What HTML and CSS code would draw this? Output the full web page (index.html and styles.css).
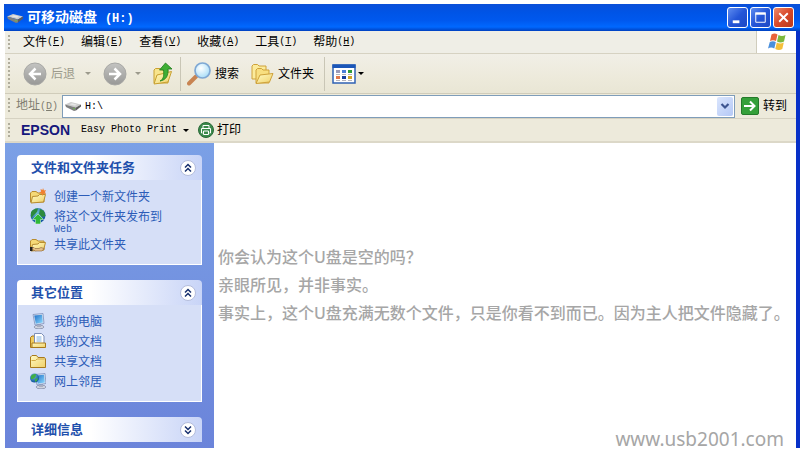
FILE: index.html
```html
<!DOCTYPE html>
<html lang="zh-CN">
<head>
  <meta charset="UTF-8">
  <meta name="viewport" content="width=device-width, initial-scale=1.0">
  <title>可移动磁盘 (H:)</title>
  <link rel="stylesheet" href="styles.css">
</head>
<body>
  <!-- shared icons -->
  <svg class="defs" width="0" height="0" aria-hidden="true">
    <defs>
      <linearGradient id="gray" x1="0" y1="0" x2="0" y2="1"><stop offset="0" stop-color="#c4c4c2"/><stop offset="1" stop-color="#989896"/></linearGradient>
      <linearGradient id="yellow" x1="0" y1="0" x2="1" y2="1"><stop offset="0" stop-color="#fffbc4"/><stop offset="1" stop-color="#f0d068"/></linearGradient>
      <linearGradient id="screen" x1="0" y1="0" x2="1" y2="1"><stop offset="0" stop-color="#1f6fc8"/><stop offset="1" stop-color="#8edcff"/></linearGradient>
      <radialGradient id="globe" cx="0.4" cy="0.3" r="0.7"><stop offset="0" stop-color="#6cc0d8"/><stop offset="1" stop-color="#0d4f9c"/></radialGradient>
      <radialGradient id="lens" cx="0.4" cy="0.35" r="0.7"><stop offset="0" stop-color="#ffffff"/><stop offset="1" stop-color="#a4dcf8"/></radialGradient>
    </defs>
    <symbol id="drive" viewBox="0 0 16 16">
      <path d="M0 6.500 6 4 16 6.500 11 9.500z" fill="#cccccc"/>
      <path d="M0 6.500 11 9.500 11 12.500 9 13 1 9z" fill="#7f7f7f"/>
      <path d="M11 9.500 16 6.500 16 8.500 11 12.500z" fill="#5c5c5c"/>
      <path d="M4 6.300 7 5.200 12 6.500 10 7.800z" fill="#e6e6e6"/>
      <circle cx="9" cy="10.600" r="0.8" fill="#6fc04a"/>
    </symbol>
    <symbol id="up2" viewBox="0 0 18 18">
      <circle cx="9" cy="9" r="7.500" fill="#fff" stroke="#b4bddc"/>
      <path d="M6 8.500 9 5.500l3 3M6 12.500l3-3 3 3" fill="none" stroke="#17306e" stroke-width="1.500"/>
    </symbol>
    <symbol id="down2" viewBox="0 0 18 18">
      <circle cx="9" cy="9" r="7.500" fill="#fff" stroke="#b4bddc"/>
      <path d="M6 5.500l3 3 3-3M6 9.500l3 3 3-3" fill="none" stroke="#17306e" stroke-width="1.500"/>
    </symbol>
    <symbol id="folder" viewBox="0 0 16 16">
      <path d="M.5 14V4L2 2.500h4.500L8 4.500h6.500L15.500 6v8.500H.5z" fill="url(#yellow)" stroke="#a87a1c"/>
      <path d="M1.500 7.500h4L7 6h7.500" fill="none" stroke="#d4ac48"/>
    </symbol>
    <symbol id="open" viewBox="0 0 16 16">
      <path d="M.5 14V5L2 3.500h4L8 5h6v9z" fill="#f5d977" stroke="#b88c30"/>
      <path d="M1 15 2.500 8.500 8 8l1.500-1.500h6L13.500 14z" fill="url(#yellow)" stroke="#b88c30"/>
    </symbol>
    <symbol id="monitor" viewBox="0 0 16 16">
      <ellipse cx="9" cy="14" rx="5" ry="1.800" fill="#cfd3df" stroke="#7d86a4" stroke-width="0.700"/>
      <path d="M7 10h4v4H7z" fill="#a9afc2"/>
      <path d="M3 1.500 13 .5 14 10.500 5 12z" fill="#d9e3f2" stroke="#7286b4" stroke-width="0.700"/>
      <path d="M4.200 2.500 12 1.700 12.800 9.500 5.800 10.700z" fill="url(#screen)"/>
    </symbol>
  </svg>

  <div class="window">
    <header class="titlebar">
      <svg class="icon16"><use href="#drive"/></svg>
      <h1>可移动磁盘 <span>(H:)</span></h1>
      <button class="win-btn" aria-label="最小化"><svg viewBox="0 0 20 20"><path d="M5 13h7v3H5z" fill="#fff"/></svg></button>
      <button class="win-btn" aria-label="最大化"><svg viewBox="0 0 20 20"><path d="M5 6h10v9H5z" fill="none" stroke="#fff"/><path d="M4.500 4.500h11v2.500h-11z" fill="#fff"/></svg></button>
      <button class="win-btn close" aria-label="关闭"><svg viewBox="0 0 20 20"><path d="M5.500 5.500l9 9M14.500 5.500l-9 9" stroke="#fff" stroke-width="2"/></svg></button>
    </header>

    <div class="frame">
      <nav class="menubar">
        <i class="grip"></i>
        <button>文件<span class="en">(<u>F</u>)</span></button>
        <button>编辑<span class="en">(<u>E</u>)</span></button>
        <button>查看<span class="en">(<u>V</u>)</span></button>
        <button>收藏<span class="en">(<u>A</u>)</span></button>
        <button>工具<span class="en">(<u>T</u>)</span></button>
        <button>帮助<span class="en">(<u>H</u>)</span></button>
        <div class="flag">
          <svg viewBox="0 0 20 18">
            <path d="M4.500 1.500Q7.500-.5 10.500 1.500L9 8Q6 6.300 3 8z" fill="#e8623a"/>
            <path d="M11.500 2Q15 4 18.500 2L17 8.500Q13.500 10.500 10 8.500z" fill="#7cb83c"/>
            <path d="M2.800 9Q6 7.300 8.800 9L7.300 15.500Q4 13.500 1 15.500z" fill="#4a8fdc"/>
            <path d="M9.800 9.500Q13 11.500 16.800 9.500L15.300 16Q12 18 8.300 16z" fill="#f4bf3a"/>
          </svg>
        </div>
      </nav>

      <div class="toolbar">
        <i class="grip"></i>
        <button class="back" disabled>
          <svg class="icon24" viewBox="0 0 24 24"><circle cx="12" cy="12" r="11" fill="url(#gray)" stroke="#a8a8a5"/><path d="M18 12H8M12.500 6.500 7 12l5.500 5.500" fill="none" stroke="#fff" stroke-width="2.500"/></svg>
          后退
          <i class="arrow"></i>
        </button>
        <button class="forward" disabled aria-label="前进">
          <svg class="icon24" viewBox="0 0 24 24"><circle cx="12" cy="12" r="11" fill="url(#gray)" stroke="#a8a8a5"/><path d="M6 12h10M11.500 6.500 17 12l-5.500 5.500" fill="none" stroke="#fff" stroke-width="2.500"/></svg>
          <i class="arrow"></i>
        </button>
        <button class="up" aria-label="向上">
          <svg class="icon24" viewBox="0 0 24 24">
            <path d="M3 21V8l1.500-1.500H9L11 8h6v13z" fill="#f8e48c" stroke="#c8a030"/>
            <path d="M3 22 6 13l14.500-3.500L17 20z" fill="url(#yellow)" stroke="#c8a030"/>
            <path d="M9 19c4-2 4-6 3.500-11H8.500L14.500 1 21 7h-4c.5 7-2 11-8 12z" fill="#3fae35" stroke="#1e7c1c" stroke-width="0.800"/>
          </svg>
        </button>
        <i class="sep"></i>
        <button class="search">
          <svg class="icon24" viewBox="0 0 24 24"><path d="M2 21.500 9 14.500" stroke="#c88452" stroke-width="4" stroke-linecap="round"/><circle cx="15.500" cy="8.500" r="7.500" fill="url(#lens)" stroke="#7fa8d4" stroke-width="1.700"/></svg>
          搜索
        </button>
        <button class="folders">
          <svg class="icon24" viewBox="0 0 24 24">
            <path d="M2 17V4l1.500-1.500h4L9 4h7v4L8 17z" fill="#fbeb9c" stroke="#cfa23a"/>
            <path d="M6 21V8l1.500-1.500h4L13 8h6v13z" fill="#f8df80" stroke="#cfa23a"/>
            <path d="M6 21.500 10 13l13-1.500L19.500 20z" fill="url(#yellow)" stroke="#cfa23a"/>
          </svg>
          文件夹
        </button>
        <i class="sep"></i>
        <button class="views" aria-label="查看">
          <svg class="icon24" viewBox="0 0 24 24">
            <path d="M1 3h22v18H1z" fill="#fff" stroke="#2f62b4" stroke-width="1.500"/><path d="M.5 2.500h23v3.500H.5z" fill="#1b56b8"/>
            <path d="M4 8h4v3H4z" fill="#9a9ab8"/><path d="M10 8h4v3h-4z" fill="#4b7fd8"/><path d="M16 8h4v3h-4z" fill="#2f9c3c"/>
            <path d="M4 14h4v3H4z" fill="#e0784c"/><path d="M10 14h4v3h-4z" fill="#173f9c"/><path d="M16 14h4v3h-4z" fill="#d0a428"/>
            <path d="M4 12.500h4M10 12.500h4M16 12.500h4M4 18.500h4M10 18.500h4M16 18.500h4" stroke="#b4b4bc"/>
          </svg>
          <i class="arrow"></i>
        </button>
      </div>

      <div class="addressbar">
        <i class="grip"></i>
        <label for="address">地址<span class="en">(<u>D</u>)</span></label>
        <div class="combo">
          <svg class="icon16"><use href="#drive"/></svg>
          <input id="address" type="text" value="H:\">
          <button class="drop" aria-label="展开"><svg viewBox="0 0 16 18"><path d="M4.500 7 8 10.500 11.500 7" fill="none" stroke="#3d5590" stroke-width="2.200"/></svg></button>
        </div>
        <button class="go">
          <svg viewBox="0 0 18 18"><rect x=".5" y=".5" width="17" height="17" rx="1.500" fill="#35a03a" stroke="#247a2a"/><path d="M3 9h10M9 4.500 13.500 9 9 13.500" fill="none" stroke="#fff" stroke-width="2"/></svg>
          转到
        </button>
      </div>

      <div class="epsonbar">
        <i class="grip"></i>
        <strong>EPSON</strong>
        <button class="photo"><span class="en">Easy Photo Print</span><i class="arrow"></i></button>
        <button class="print">
          <svg class="icon16" viewBox="0 0 16 16"><circle cx="8" cy="8" r="7.500" fill="#3c8a4c" stroke="#2a6a38"/><path d="M5 6V3.500h6V6M4.500 11h-1V6.500h9V11h-1M5.500 9h5v3.500h-5z" fill="none" stroke="#fff"/></svg>
          打印
        </button>
      </div>

      <div class="main">
        <aside class="sidebar">
          <section class="panel">
            <h2>文件和文件夹任务 <button aria-label="折叠"><svg><use href="#up2"/></svg></button></h2>
            <ul>
              <li><a href="#"><svg class="icon16" viewBox="0 0 16 16"><use href="#open"/><path d="M13 0l1 2.500 2-.5-1 2 1 2-2.500-.5L12.500 8l-1-2.500L9 5l2-1.500L10.500 1l2 1z" fill="#f08030"/></svg><span>创建一个新文件夹</span></a></li>
              <li><a href="#"><svg class="icon16" viewBox="0 0 16 16"><circle cx="8" cy="7.500" r="7.500" fill="url(#globe)"/><path d="M1 4q3-4 7-3.500L7 4 4 7 1 10zM10 1l4 2 1.500 5-3.500 1-3-3z" fill="#2c8a3c"/><path d="M8 6l5.500 5.500h-3V16h-5v-4.500h-3z" fill="#30b838" stroke="#c8f4c8" stroke-width="0.600"/></svg><span>将这个文件夹发布到<span class="en">Web</span></span></a></li>
              <li><a href="#"><svg class="icon16" viewBox="0 0 16 16"><use href="#open"/><path d="M0 11.500h4l1 1h4l2-1 3 1-2 2.500H5L4 14H0z" fill="#e6c088" stroke="#8a6238" stroke-width="0.600"/><path d="M0 11h2.500v4H0z" fill="#222"/></svg><span>共享此文件夹</span></a></li>
            </ul>
          </section>

          <section class="panel">
            <h2>其它位置 <button aria-label="折叠"><svg><use href="#up2"/></svg></button></h2>
            <ul>
              <li><a href="#"><svg class="icon16"><use href="#monitor"/></svg><span>我的电脑</span></a></li>
              <li><a href="#"><svg class="icon16" viewBox="0 0 16 16"><path d="M.5 14.500v-10L2 3h3v11.500z" fill="#f0cc60" stroke="#a87a1c"/><path d="M4.500.5h7L14 3v9H4.500z" fill="#fff" stroke="#7c8fb8"/><path d="M6.500 4h5M6.500 6h5M6.500 8h5" stroke="#7fb0e0"/><path d="M2 14.500V10h13.500v4.500z" fill="url(#yellow)" stroke="#a87a1c"/></svg><span>我的文档</span></a></li>
              <li><a href="#"><svg class="icon16"><use href="#folder"/></svg><span>共享文档</span></a></li>
              <li><a href="#"><svg class="icon16" viewBox="0 0 16 16"><use href="#monitor" x="2"/><circle cx="4.500" cy="5" r="4.500" fill="url(#globe)"/><path d="M1 3q2-2.500 5-2L5.500 4 3 6 1 6zM5 6l3-1-1 3-2 1z" fill="#3fae45"/></svg><span>网上邻居</span></a></li>
            </ul>
          </section>

          <section class="panel">
            <h2>详细信息 <button aria-label="展开"><svg><use href="#down2"/></svg></button></h2>
          </section>
        </aside>

        <main class="content">
          <div class="message">
            <p>你会认为这个U盘是空的吗？</p>
            <p>亲眼所见，并非事实。</p>
            <p>事实上，这个U盘充满无数个文件，只是你看不到而已。因为主人把文件隐藏了。</p>
          </div>
          <footer>www.usb2001.com</footer>
        </main>
      </div>
    </div>
  </div>
</body>
</html>
```
FILE: styles.css
```css
* {
  box-sizing: border-box;
}
body {
  margin: 0;
  background: #fff;
  font-family: "Liberation Sans", "Noto Sans CJK SC", sans-serif;
  font-size: 12px;
  line-height: 16px;
  color: #000;
}
button {
  display: flex;
  align-items: center;
  padding: 0;
  border: none;
  background: none;
  font: inherit;
  color: inherit;
  white-space: nowrap;
}
svg {
  display: block;
  flex: none;
}
.defs {
  position: absolute;
}
.icon16 {
  width: 16px;
  height: 16px;
}
.icon24 {
  width: 24px;
  height: 24px;
}
/* half-width latin, 6px a letter */
.en {
  font-family: "Liberation Mono", monospace;
  font-size: 10px;
}

.window {
  display: flex;
  flex-direction: column;
  height: 100vh;
  padding: 4px 4px 5px;
}

.titlebar {
  display: flex;
  align-items: center;
  gap: 2px;
  flex: none;
  height: 27px;
  padding: 0 6px 0 3px;
  background: linear-gradient(#0a4fd8, #0054e6 30%, #0058ee 60%, #0068ff 85%, #0040c0);
  color: #fff;
}
.titlebar h1 {
  flex: 1;
  margin: 0 0 0 2px;
  font-size: 14px;
  font-weight: bold;
}
.titlebar h1 span {
  margin-left: 4px;
  font-family: "Liberation Mono", monospace;
  font-size: 12px;
}
.win-btn {
  width: 21px;
  height: 21px;
  border: 1px solid #fff;
  border-radius: 3px;
  background: linear-gradient(135deg, #5f8df0, #2456d8 50%, #1c48c4);
}
.win-btn.close {
  background: linear-gradient(135deg, #ee8a6a, #d8482a 50%, #b83a1c);
}
.win-btn svg {
  width: 19px;
  height: 19px;
}

.frame {
  display: flex;
  flex-direction: column;
  flex: 1;
  min-height: 0;
  margin-left: 1px;
  border-right: 4px solid #0831c8;
  background: #edeadb;
}
.grip {
  flex: none;
  align-self: stretch;
  width: 2px;
  margin: 4px 0 4px 3px;
  background: repeating-linear-gradient(#b0ad9c 0 2px, transparent 2px 4px);
}
.arrow {
  border: 3px solid transparent;
  border-top-color: currentColor;
  border-bottom: 0;
}
.sep {
  align-self: stretch;
  width: 1px;
  margin: 3px 0 2px;
  background: #c9c6b6;
}

.menubar {
  display: flex;
  align-items: center;
  gap: 16px;
  flex: none;
  height: 23px;
  border-bottom: 1px solid #d6d2c2;
  background: #efeee6;
}
.menubar .grip {
  margin-right: -3px;
}
.flag {
  display: flex;
  align-items: center;
  justify-content: center;
  align-self: stretch;
  width: 40px;
  margin-left: auto;
  border-left: 1px solid #d0cdbd;
  background: #fff;
}
.flag svg {
  width: 20px;
  height: 18px;
}

.toolbar {
  display: flex;
  align-items: center;
  flex: none;
  height: 40px;
  border-bottom: 1px solid #d0ccba;
  background: linear-gradient(#f1efe7, #edeadb 60%, #e9e6d5);
}
.toolbar button:disabled {
  color: #9c9a8c;
}
.back {
  gap: 4px;
  margin-left: 13px;
}
.back .arrow {
  margin-left: 6px;
}
.forward {
  gap: 8px;
  margin-left: 12px;
}
.up {
  margin: 0 5px 0 10px;
}
.search {
  gap: 4px;
  margin-left: 6px;
}
.folders {
  gap: 4px;
  margin: 0 10px 0 11px;
}
.views {
  gap: 2px;
  margin-left: 7px;
}

.addressbar {
  display: flex;
  align-items: center;
  flex: none;
  height: 25px;
  border-bottom: 1px solid #d6d2c2;
}
.addressbar label {
  margin: 0 4px 0 6px;
  color: #7f7d70;
}
.combo {
  display: flex;
  align-items: center;
  flex: 1;
  height: 23px;
  padding: 1px 1px 1px 2px;
  border: 1px solid #7f9db9;
  background: #fff;
}
.combo input {
  flex: 1;
  min-width: 0;
  padding: 0 4px;
  border: none;
  outline: none;
  background: none;
  font-family: "Liberation Mono", monospace;
  font-size: 10px;
}
.drop {
  width: 16px;
  height: 19px;
  border-radius: 2px;
  background: linear-gradient(135deg, #dbe6fd, #b4c8f6);
}
.drop svg {
  width: 16px;
  height: 18px;
}
.go {
  gap: 4px;
  margin: 0 9px 0 6px;
}
.go svg {
  width: 18px;
  height: 18px;
}

.epsonbar {
  display: flex;
  align-items: center;
  flex: none;
  height: 24px;
  border-bottom: 2px solid #dcd8c8;
}
.epsonbar strong {
  margin: 0 11px 0 11px;
  font-size: 14px;
  color: #16187c;
}
.photo {
  gap: 6px;
}
.print {
  gap: 3px;
  margin-left: 9px;
}

.main {
  display: flex;
  flex: 1;
  min-height: 0;
}
.sidebar {
  display: flex;
  flex-direction: column;
  gap: 15px;
  flex: none;
  width: 209px;
  padding: 12px 12px 0;
  overflow: hidden;
  background: linear-gradient(#7ba0e6, #6b84da);
}
.panel {
  flex: none;
  color: #215dc6;
}
.panel h2 {
  display: flex;
  align-items: center;
  justify-content: space-between;
  height: 25px;
  margin: 0;
  padding: 0 5px 0 14px;
  border-radius: 4px 4px 0 0;
  background: linear-gradient(to right, #fff 40%, #c8d4f7);
  font-size: 13px;
  color: #1f50ac;
}
.panel h2 svg {
  width: 18px;
  height: 18px;
}
.panel ul {
  display: flex;
  flex-direction: column;
  gap: 4px;
  margin: 0;
  padding: 8px 12px 12px;
  border: 1px solid #fff;
  border-top: none;
  background: #d6dff7;
  list-style: none;
}
.panel a {
  display: flex;
  align-items: flex-start;
  gap: 8px;
  color: #2c5cb8;
  line-height: 12px;
  text-decoration: none;
}
.panel a > span {
  padding-top: 3px;
  margin-bottom: -5px;
}
.panel .en {
  display: block;
  line-height: 14px;
}

.content {
  display: flex;
  flex-direction: column;
  flex: 1;
  min-width: 0;
  padding: 100px 0 0 4px;
  background: #fff;
  color: #a6a6a6;
}
.message {
  font-family: "Noto Sans", "Noto Sans CJK SC", sans-serif;
  font-size: 16px;
  font-weight: 500;
  line-height: 28px;
  white-space: nowrap;
}
.message p {
  margin: 0;
}
footer {
  margin: auto 12px 0 0;
  font-family: "Noto Sans", sans-serif;
  font-size: 19px;
  line-height: 18px;
  text-align: right;
}
```
